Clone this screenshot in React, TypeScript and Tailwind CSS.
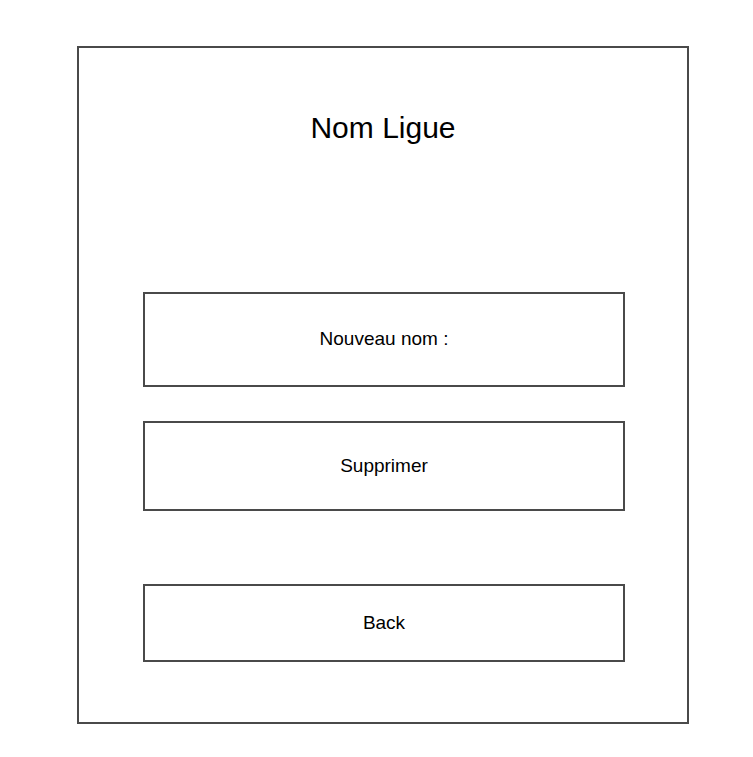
export default function App() {
  const font = { fontFamily: '"Liberation Sans", Arial, sans-serif' };
  return (
    <div className="w-[753px] h-[757px] bg-white overflow-hidden" style={font}>
      <div className="ml-[77px] mt-[46px] w-[612px] h-[678px] border-2 border-[#4a4a4a] flex flex-col">
        <div className="mt-[63px] text-center text-[30px] leading-[34px] text-black">Nom Ligue</div>
        <div className="ml-[64px] mt-[147px] w-[482px] h-[95px] border-2 border-[#4a4a4a] flex items-center justify-center text-[19px] text-black">
          Nouveau nom :
        </div>
        <div className="ml-[64px] mt-[34px] w-[482px] h-[90px] border-2 border-[#4a4a4a] flex items-center justify-center text-[19px] text-black">
          Supprimer
        </div>
        <div className="ml-[64px] mt-[73px] w-[482px] h-[78px] border-2 border-[#4a4a4a] flex items-center justify-center text-[19px] text-black">
          Back
        </div>
      </div>
    </div>
  );
}
